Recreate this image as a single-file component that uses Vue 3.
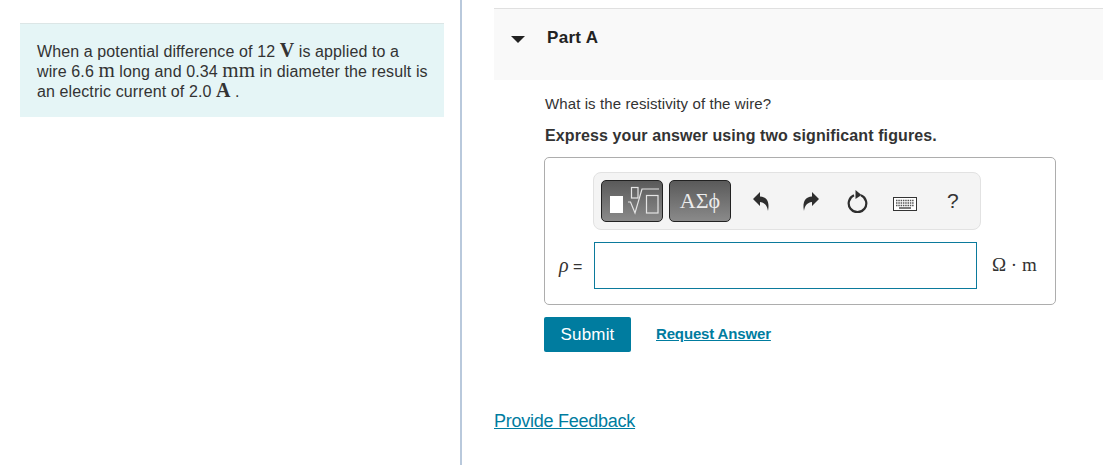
<script setup>
const undoPath = 'M0 7 7 0v4.500c6 .5 10 4 8 14.500-.7-5-3-8.500-8-9V14z'
</script>

<template>
  <div class="page">
    <aside class="left-col">
      <div class="intro">
        <p>
          When a potential difference of 12 <span class="math strong">V</span> is applied to a
          wire 6.6 <span class="math">m</span> long and 0.34 <span class="math">mm</span> in diameter the result is
          an electric current of 2.0 <span class="math strong">A</span> .
        </p>
      </div>
    </aside>

    <main class="right-col">
      <header class="part-head">
        <span class="caret"></span>
        <h2>Part A</h2>
      </header>

      <section class="part-body">
        <p class="question">What is the resistivity of the wire?</p>
        <p class="instruction">Express your answer using two significant figures.</p>

        <div class="answer-box">
          <div class="toolbar">
            <button class="tpl-btn tpl-first">
              <svg width="60" height="40" viewBox="0 0 60 40">
                <rect x="8" y="15" width="13" height="17" fill="#fff" />
                <g fill="none" stroke="#e4e4e4" stroke-width="1.200">
                  <rect x="29.500" y="6.500" width="6.500" height="10.500" />
                  <path d="M26 21h2.500l4.500 11 7-24h17" />
                  <rect x="44.500" y="14.500" width="11.500" height="17.500" />
                </g>
              </svg>
            </button>
            <button class="tpl-btn tpl-second">ΑΣϕ</button>

            <svg class="tool undo" width="17" height="19" viewBox="0 0 17 19">
              <path :d="undoPath" fill="#2e2e2e" />
            </svg>
            <svg class="tool redo" width="17" height="19" viewBox="0 0 17 19">
              <path :d="undoPath" fill="#2e2e2e" transform="matrix(-1 0 0 1 17 0)" />
            </svg>
            <svg class="tool reload" width="21" height="23" viewBox="0 0 21 23">
              <path d="M7 5.300a8.800 8.800 0 1 0 7 0" fill="none" stroke="#2e2e2e" stroke-width="2.200" />
              <path d="M8.500 0 14.500 5 8.500 9z" fill="#2e2e2e" />
            </svg>
            <svg class="tool keyboard" width="24" height="14" viewBox="0 0 24 14">
              <rect x="0.500" y="0.500" width="23" height="13" fill="#fff" stroke="#333" />
              <path d="M3 3.500h18M3 6h18M3 8.500h18" stroke="#555" stroke-width="1.300" stroke-dasharray="1.500 .8" />
              <path d="M6 11h12" stroke="#333" stroke-width="1.300" />
            </svg>
            <span class="help">?</span>
          </div>

          <div class="input-row">
            <label class="symbol"><i>ρ</i> =</label>
            <div class="input-field"></div>
            <span class="unit">Ω · m</span>
          </div>
        </div>

        <div class="actions">
          <button class="submit">Submit</button>
          <a class="request" href="#">Request Answer</a>
        </div>
      </section>

      <a class="feedback" href="#">Provide Feedback</a>
    </main>
  </div>
</template>

<style>
html, body {
  margin: 0;
  background: #fff;
}
</style>

<style scoped>
.page {
  display: flex;
  height: 465px;
  overflow: hidden;
  font-family: "Liberation Sans", Arial, sans-serif;
  color: #333;
}

.left-col {
  box-sizing: border-box;
  width: 462px;
  flex: none;
  padding: 23px 16px 0 20px;
  border-right: 2px solid #b9c9dc;
}

.intro {
  box-sizing: border-box;
  height: 94px;
  padding: 18px 15px 0 17px;
  background: #e5f5f6;
  border-top: 1px solid #dce6e6;
}

.intro p {
  margin: 0;
  font-size: 16px;
  line-height: 20px;
  letter-spacing: 0.11px;
}

.math {
  display: inline-block;
  font-family: "Liberation Serif", "Times New Roman", serif;
  font-size: 21px;
  line-height: 16px;
  letter-spacing: 0;
}

.strong {
  font-size: 20px;
  font-weight: 700;
}

.right-col {
  flex: 1;
  padding: 8px 0 0 32px;
}

.part-head {
  display: flex;
  box-sizing: border-box;
  height: 72px;
  padding: 20px 0 0 17px;
  background: #f9f9f9;
  border-top: 1px solid #e0e0e0;
}

.caret {
  width: 0;
  height: 0;
  margin: 7px 22px 0 0;
  border-left: 7px solid transparent;
  border-right: 7px solid transparent;
  border-top: 7px solid #222;
}

h2 {
  margin: 0;
  font-size: 17px;
  line-height: 18px;
  font-weight: 700;
  letter-spacing: 0.3px;
  color: #222;
}

.part-body {
  padding: 15px 47px 0 50px;
}

.question {
  margin: 0 0 0 1px;
  font-size: 15px;
  line-height: 18px;
  letter-spacing: 0.1px;
}

.instruction {
  margin: 14px 0 0 1px;
  font-size: 16px;
  line-height: 18px;
  font-weight: 700;
  letter-spacing: 0.1px;
}

.answer-box {
  box-sizing: border-box;
  height: 148px;
  margin-top: 12px;
  padding: 14px 0 0 48px;
  border: 1px solid #adadad;
  border-radius: 5px;
}

.toolbar {
  display: flex;
  align-items: center;
  box-sizing: border-box;
  width: 388px;
  height: 58px;
  padding: 0 0 0 7px;
  background: #f4f4f4;
  border: 1px solid #e2e2e2;
  border-radius: 8px;
}

.tpl-btn {
  box-sizing: border-box;
  height: 42px;
  padding: 0;
  border: 1px solid #222;
  border-radius: 5px;
  background: linear-gradient(#5a5a5a, #8a8a8a);
  color: #ececec;
}

.tpl-first {
  display: flex;
  width: 62px;
}

.tpl-second {
  width: 62px;
  margin-left: 6px;
  font-family: "Liberation Serif", serif;
  font-size: 22px;
}

.undo {
  margin-left: 22px;
}

.redo {
  margin-left: 32px;
}

.reload {
  margin-left: 28px;
}

.keyboard {
  margin: 6px 0 0 25px;
}

.help {
  margin-left: 30px;
  font-size: 21px;
  color: #333;
}

.input-row {
  display: flex;
  align-items: center;
  margin: 12px 0 0 -34px;
}

.symbol {
  width: 35px;
  font-size: 16px;
}

.symbol i {
  font-family: "Liberation Serif", serif;
  font-size: 20px;
}

.input-field {
  box-sizing: border-box;
  width: 383px;
  height: 47px;
  border: 1px solid #0b7a9c;
  background: #fff;
}

.unit {
  margin: -2px 0 0 15px;
  font-family: "Liberation Serif", serif;
  font-size: 19px;
}

.actions {
  display: flex;
  align-items: center;
  margin-top: 12px;
}

.submit {
  width: 87px;
  height: 35px;
  padding: 0;
  border: none;
  border-radius: 2px;
  background: #007c9f;
  color: #fff;
  font-family: inherit;
  font-size: 17px;
  letter-spacing: 0.2px;
}

.request {
  margin: -2px 0 0 25px;
  color: #007c9f;
  font-size: 15px;
  font-weight: 700;
  letter-spacing: -0.15px;
}

.feedback {
  display: inline-block;
  margin-top: 59px;
  color: #007c9f;
  font-size: 18px;
  letter-spacing: -0.25px;
}
</style>
